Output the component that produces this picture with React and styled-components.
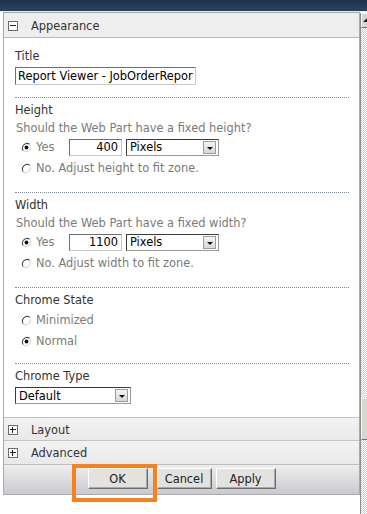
import React from 'react';
import styled, { createGlobalStyle } from 'styled-components';

const FONT = '"DejaVu Sans", Verdana, sans-serif';

const GlobalStyle = createGlobalStyle`
  html, body { margin: 0; padding: 0; background: #fff; }
  body {
    font-family: ${FONT};
    font-size: 11.4px;
    color: #333;
    width: 367px;
    height: 514px;
    overflow: hidden;
  }
  * { box-sizing: border-box; }
`;

const TopBar = styled.div`
  height: 12px;
  background: linear-gradient(#1d3249, #2c4360);
  border-bottom: 1px solid #e6e8ec;
`;

const Frame = styled.div`
  display: flex;
  align-items: flex-start;
  padding-left: 3px;
  width: 367px;
  overflow: hidden;
`;

const Panel = styled.div`
  flex: 0 0 357px;
  border: 1px solid #a9a9a9;
  background: #fff;
`;

const GroupHeader = styled.div`
  display: flex;
  align-items: center;
  height: ${p => p.$h}px;
  padding: 1px 0 0 4px;
  background: ${p => (p.$open ? '#eeeeee' : 'linear-gradient(#f2f2f2, #e9e9e9)')};
  border-top: ${p => (p.$top ? '1px solid #c4c4c4' : 'none')};
  border-bottom: ${p => (p.$bottom ? '1px solid #b9b9b9' : 'none')};
  color: #333;
  line-height: 14px;
`;

const ToggleBox = styled.span`
  position: relative;
  flex: 0 0 10px;
  width: 10px;
  height: 10px;
  margin-right: 13px;
  border: 1px solid #6b6b6b;
  background: #fff;
  &::before {
    content: '';
    position: absolute;
    left: 1px;
    top: 3px;
    width: 6px;
    height: 1px;
    background: #222;
  }
  &::after {
    content: '';
    position: absolute;
    left: 3px;
    top: 1px;
    width: 1px;
    height: 6px;
    background: #222;
    display: ${p => (p.$plus ? 'block' : 'none')};
  }
`;

const Body = styled.div`
  padding: 0 10px 0 11px;
`;

const Section = styled.div`
  padding: ${p => p.$pt}px 0 ${p => p.$pb}px 0;
  border-bottom: ${p => (p.$last ? 'none' : '1px dotted #7d8aa0')};
`;

const Label = styled.div`
  line-height: 14px;
  color: #333;
  margin-bottom: ${p => p.$mb ?? 4}px;
`;

const Question = styled.div`
  line-height: 14px;
  color: #7a7a7a;
  padding-left: 1px;
  margin-bottom: 2px;
`;

const RadioRow = styled.div`
  display: flex;
  align-items: center;
  height: 20px;
  padding-left: 6px;
  & + & { margin-top: 1px; }
`;

const RadioOption = styled.label`
  display: flex;
  align-items: center;
  gap: 4px;
  color: #7a7a7a;
  line-height: 14px;
  width: ${p => (p.$w ? `${p.$w}px` : 'auto')};
  flex: 0 0 auto;
`;

const TextInput = styled.input`
  display: block;
  width: ${p => p.$w}px;
  height: ${p => p.$h}px;
  padding: 0 ${p => (p.$right ? 3 : 2)}px 0 2px;
  margin: 0;
  border: 1px solid;
  border-color: #6e6e6e #c9c9c9 #c9c9c9 #6e6e6e;
  font-family: ${FONT};
  font-size: 11.4px;
  color: #000;
  text-align: ${p => (p.$right ? 'right' : 'left')};
  background: #fff;
  outline: none;
  overflow: hidden;
`;

const Select = styled.div`
  display: flex;
  align-items: center;
  justify-content: space-between;
  width: ${p => p.$w}px;
  height: 17px;
  margin-left: ${p => p.$ml ?? 0}px;
  padding: 0 2px 0 3px;
  border: 1px solid;
  border-color: #3a3a3a #9a9a9a #9a9a9a #3a3a3a;
  background: #fff;
  color: #000;
  line-height: 14px;
`;

const DropButton = styled.span`
  position: relative;
  width: 13px;
  height: 13px;
  border: 1px solid #9c9c9c;
  background: linear-gradient(#f4f4f4, #d8d8d8);
  &::after {
    content: '';
    position: absolute;
    left: 3px;
    top: 5px;
    border-left: 3px solid transparent;
    border-right: 3px solid transparent;
    border-top: 3px solid #111;
  }
`;

const Footer = styled.div`
  display: flex;
  justify-content: center;
  align-items: flex-start;
  gap: 4px;
  height: 30px;
  padding: 3px 0 0 0;
  border-top: 1px solid #bdbdbd;
  background: linear-gradient(#eeeeee, #d9d8dd 60%, #cac8d1);
`;

const ButtonWrap = styled.div`
  position: relative;
  margin-right: ${p => p.$mr ?? 0}px;
`;

const Button = styled.button`
  display: block;
  width: ${p => p.$w}px;
  height: 21px;
  margin: 0;
  padding: 0;
  border: 1px solid;
  border-color: #ffffff #6c6c6c #6c6c6c #ffffff;
  box-shadow: inset -1px -1px 0 #a8a8a8;
  background: #e3e2df;
  font-family: ${FONT};
  font-size: 11.4px;
  color: #222;
`;

const Highlight = styled.div`
  position: absolute;
  left: -16px;
  right: -9px;
  top: -4px;
  bottom: -13px;
  border: 4px solid #f5821f;
  pointer-events: none;
`;

const Scrollbar = styled.div`
  flex: 0 0 7px;
  margin-top: 1px;
  height: 502px;
  display: flex;
  flex-direction: column;
  border-left: 1px solid #8d8d8d;
  background-color: #fff;
  background-image: repeating-conic-gradient(#cfcfcf 0 25%, #ffffff 0 50%);
  background-size: 2px 2px;
`;

const ScrollButton = styled.div`
  position: relative;
  height: 15px;
  background: #d8d6d0;
  border-top: 1px solid #f4f4f4;
  border-left: 1px solid #f4f4f4;
  border-bottom: 1px solid #6f6f6f;
  &::after {
    content: '';
    position: absolute;
    left: 1px;
    top: 4px;
    border-left: 4px solid transparent;
    border-right: 4px solid transparent;
    border-bottom: 4px solid #222;
  }
`;

const Thumb = styled.div`
  margin-top: ${p => p.$top}px;
  height: ${p => p.$h}px;
  background: #d8d6d0;
  border-top: 1px solid #f4f4f4;
  border-left: 1px solid #f4f4f4;
  border-bottom: 1px solid #6f6f6f;
`;

const RadioIcon = ({ checked }) => (
  <svg width="11" height="11" viewBox="0 0 11 11" aria-hidden="true">
    <circle cx="5.5" cy="5.5" r="4.6" fill="#fff" />
    <path d="M2.3 8.7 A4.6 4.6 0 0 1 8.7 2.3" stroke="#4d4d4d" strokeWidth="1.1" fill="none" />
    <path d="M8.7 2.3 A4.6 4.6 0 0 1 2.3 8.7" stroke="#d8d8d8" strokeWidth="1.1" fill="none" />
    {checked && <circle cx="5.5" cy="5.5" r="1.9" fill="#111" />}
  </svg>
);

const Radio = ({ checked, children, w }) => (
  <RadioOption $w={w}>
    <RadioIcon checked={checked} />
    <span>{children}</span>
  </RadioOption>
);

const SizeSection = ({ label, question, value, noText }) => (
  <Section $pt={5} $pb={14}>
    <Label>{label}</Label>
    <Question>{question}</Question>
    <RadioRow>
      <Radio checked w={48}>Yes</Radio>
      <TextInput $w={53} $h={17} $right readOnly value={value} />
      <Select $w={93} $ml={4}>
        <span>Pixels</span>
        <DropButton />
      </Select>
    </RadioRow>
    <RadioRow>
      <Radio>{noText}</Radio>
    </RadioRow>
  </Section>
);

export default function App() {
  return (
    <>
      <GlobalStyle />
      <TopBar />
      <Frame>
        <Panel>
          <GroupHeader $h={25} $open $bottom>
            <ToggleBox />
            <span>Appearance</span>
          </GroupHeader>
          <Body>
            <Section $pt={11} $pb={12}>
              <Label>Title</Label>
              <TextInput $w={181} $h={18} readOnly value="Report Viewer - JobOrderReport" />
            </Section>
            <SizeSection
              label="Height"
              question="Should the Web Part have a fixed height?"
              value="400"
              noText="No. Adjust height to fit zone."
            />
            <SizeSection
              label="Width"
              question="Should the Web Part have a fixed width?"
              value="1100"
              noText="No. Adjust width to fit zone."
            />
            <Section $pt={5} $pb={12}>
              <Label $mb={3}>Chrome State</Label>
              <RadioRow>
                <Radio>Minimized</Radio>
              </RadioRow>
              <RadioRow>
                <Radio checked>Normal</Radio>
              </RadioRow>
            </Section>
            <Section $pt={5} $pb={13} $last>
              <Label>Chrome Type</Label>
              <Select $w={116}>
                <span>Default</span>
                <DropButton />
              </Select>
            </Section>
          </Body>
          <GroupHeader $h={23} $top>
            <ToggleBox $plus />
            <span>Layout</span>
          </GroupHeader>
          <GroupHeader $h={24} $top>
            <ToggleBox $plus />
            <span>Advanced</span>
          </GroupHeader>
          <Footer>
            <ButtonWrap $mr={5}>
              <Button $w={60}>OK</Button>
              <Highlight />
            </ButtonWrap>
            <ButtonWrap>
              <Button $w={55}>Cancel</Button>
            </ButtonWrap>
            <ButtonWrap>
              <Button $w={60}>Apply</Button>
            </ButtonWrap>
          </Footer>
        </Panel>
        <Scrollbar>
          <ScrollButton />
          <Thumb $top={370} $h={42} />
        </Scrollbar>
      </Frame>
    </>
  );
}
